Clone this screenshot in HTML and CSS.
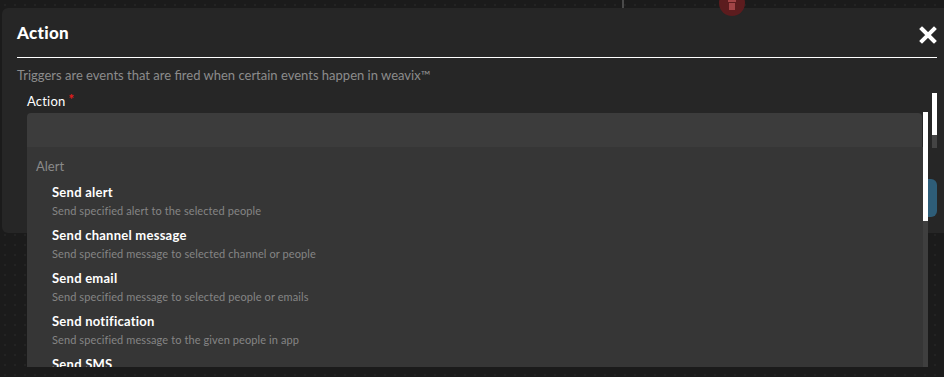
FILE: index.html
```html
<!DOCTYPE html>
<html>
<head>
<meta charset="UTF-8">
<link rel="stylesheet" href="styles.css">
<title>Action</title>
</head>
<body>
  <div class="backdrop">
    <span class="divider"></span>
    <span class="delete-btn">
      <svg width="12" height="12" viewBox="0 0 12 12"><rect x="2" y="1" width="8" height="2" fill="#a14446"/><rect x="3" y="4" width="6" height="7" fill="#a14446"/></svg>
    </span>
  </div>

  <div class="modal">
    <div class="modal-header">
      <h1 class="modal-title">Action</h1>
      <svg class="close" width="18" height="18" viewBox="0 0 18 18">
        <path d="M3 3 L15 15 M15 3 L3 15" stroke="#fff" stroke-width="4" stroke-linecap="square"/>
      </svg>
    </div>
    <p class="subtitle">Triggers are events that are fired when certain events happen in weavix™</p>

    <div class="modal-body">
      <div class="field">
        <label class="field-label">Action<span class="req">*</span></label>
        <div class="select-wrap">
          <div class="select"></div>
          <div class="menu">
            <div class="group-label">Alert</div>
            <div class="option">
              <div class="option-title">Send alert</div>
              <div class="option-desc">Send specified alert to the selected people</div>
            </div>
            <div class="option">
              <div class="option-title">Send channel message</div>
              <div class="option-desc">Send specified message to selected channel or people</div>
            </div>
            <div class="option">
              <div class="option-title">Send email</div>
              <div class="option-desc">Send specified message to selected people or emails</div>
            </div>
            <div class="option">
              <div class="option-title">Send notification</div>
              <div class="option-desc">Send specified message to the given people in app</div>
            </div>
            <div class="option">
              <div class="option-title">Send SMS</div>
              <div class="option-desc">Send specified message to selected phone numbers</div>
            </div>
          </div>
          <div class="menu-scroll"><div class="menu-thumb"></div></div>
        </div>
      </div>
      <div class="body-scroll"><div class="body-thumb"></div></div>
    </div>

    <div class="modal-footer">
      <button class="save">Save</button>
    </div>
  </div>
</body>
</html>
```

FILE: styles.css
```css
body {
  margin: 0;
  height: 377px;
  overflow: hidden;
  background-color: #1b1b1b;
  background-image: radial-gradient(circle, #232323 1px, transparent 1.5px);
  background-size: 10px 10px;
  font-family: 'Lato', 'Noto Sans', sans-serif;
}

.backdrop {
  position: relative;
  height: 8px;
}
.divider {
  position: absolute;
  left: 622px;
  top: 0;
  width: 2px;
  height: 8px;
  background-color: #4a4a4a;
}
.delete-btn {
  position: absolute;
  left: 719px;
  top: -10px;
  width: 26px;
  height: 26px;
  border-radius: 50%;
  background-color: #5c1c1e;
  display: flex;
  align-items: flex-end;
  justify-content: center;
}
.delete-btn svg {
  margin-bottom: 5px;
}

.modal {
  margin-left: 2px;
  width: 942px;
  height: 225px;
  background-color: #262626;
  border-radius: 6px 0 0 6px;
  box-sizing: border-box;
  padding-right: 7px;
}

.modal-header {
  display: flex;
  justify-content: space-between;
  align-items: center;
  margin-left: 15px;
  padding: 13px 0 12px;
  border-bottom: 1px solid #fff;
}
.modal-title {
  margin: 0;
  font-size: 17px;
  line-height: 24px;
  font-weight: 900;
  letter-spacing: 0.3px;
  color: #fff;
}
.close {
  margin-top: 3px;
}

.subtitle {
  margin: 9px 0 0 15px;
  font-size: 13px;
  line-height: 16px;
  color: #8c8c8c;
}

.modal-body {
  display: flex;
  margin-top: 10px;
  padding-left: 25px;
}
.field {
  width: 895px;
}
.field-label {
  display: block;
  font-size: 13px;
  line-height: 16px;
  letter-spacing: 0.2px;
  color: #fff;
}
.req {
  display: inline-block;
  margin-left: 3px;
  vertical-align: top;
  font-size: 13px;
  font-weight: 900;
  line-height: 12px;
  color: #e31b1b;
}

.select-wrap {
  position: relative;
  margin-top: 4px;
}
.select {
  height: 34px;
  background-color: #3c3c3c;
  border-radius: 4px 4px 0 0;
}

.menu {
  position: absolute;
  left: 0;
  top: 34px;
  width: 901px;
  height: 220px;
  overflow: hidden;
  background-color: #363636;
  z-index: 2;
}
.group-label {
  padding: 11px 9px 5px;
  font-size: 13px;
  line-height: 16px;
  color: #8a8a8a;
}
.option {
  padding: 5px 0 4px 25px;
}
.option-title {
  font-size: 13px;
  line-height: 16px;
  font-weight: 700;
  letter-spacing: 0.25px;
  color: #fff;
}
.option-desc {
  margin-top: 4px;
  font-size: 11px;
  line-height: 14px;
  letter-spacing: 0.1px;
  color: #858585;
}

.menu-scroll {
  position: absolute;
  left: 896px;
  top: -1px;
  width: 5px;
  height: 255px;
  background-color: #3f3f3f;
  z-index: 3;
}
.menu-thumb {
  height: 109px;
  background-color: #fff;
}

.body-scroll {
  margin-left: auto;
  width: 5px;
  height: 55px;
  background-color: #444;
}
.body-thumb {
  height: 42px;
  background-color: #fff;
}

.modal-footer {
  display: flex;
  justify-content: flex-end;
  margin-top: 31px;
}
.save {
  width: 100px;
  height: 38px;
  border: none;
  border-radius: 6px;
  background-color: #2e5d78;
  color: #fff;
  font-family: inherit;
  font-size: 13px;
}
```
